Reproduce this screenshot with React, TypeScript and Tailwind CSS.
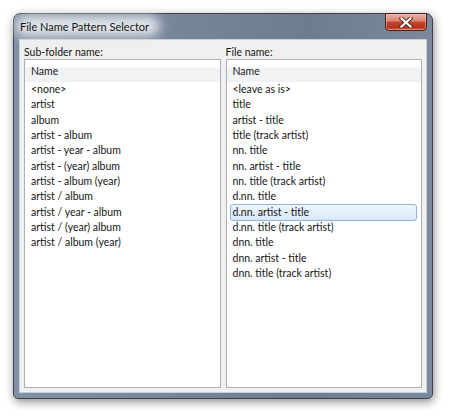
import React from "react";

const left = [
  "<none>",
  "artist",
  "album",
  "artist - album",
  "artist - year - album",
  "artist - (year) album",
  "artist - album (year)",
  "artist / album",
  "artist / year - album",
  "artist / (year) album",
  "artist / album (year)",
];

const right = [
  "<leave as is>",
  "title",
  "artist - title",
  "title (track artist)",
  "nn. title",
  "nn. artist - title",
  "nn. title (track artist)",
  "d.nn. title",
  "d.nn. artist - title",
  "d.nn. title (track artist)",
  "dnn. title",
  "dnn. artist - title",
  "dnn. title (track artist)",
];

function ListBox({ items, selected }: { items: string[]; selected?: number }) {
  return (
    <div className="flex-1 border border-[#a9b1bc] bg-white flex flex-col">
      <div className="h-[22px] shrink-0 flex items-center pl-[6px] pt-[1px] bg-[linear-gradient(to_bottom,#ffffff_0%,#ffffff_35%,#f1f2f4_36%,#f1f2f4_100%)] border-b border-[#eceef1]">
        <span className="text-[#1c1c1c]">Name</span>
      </div>
      <div className="flex flex-col">
        {items.map((t, i) => (
          <div key={i} className="relative h-[15.33px] mx-[3px] flex items-center">
            {i === selected && (
              <div className="absolute left-0 right-[1px] -top-[1px] -bottom-[1px] rounded-[3px] border border-[#8fb4e0] bg-[linear-gradient(to_bottom,#eef5fd,#d9e8fa)]" />
            )}
            <span className="relative pl-[3px] whitespace-pre text-[#151515] leading-[13px]">{t}</span>
          </div>
        ))}
      </div>
    </div>
  );
}

export default function App() {
  return (
    <div
      className="w-[450px] h-[416px] bg-white overflow-hidden pt-[13px] pl-[13px] text-[10.5px] leading-[14px]"
      style={{ fontFamily: 'Lato, "Noto Sans", sans-serif' }}
    >
      <div className="relative w-[420px] h-[386px] rounded-t-[7px] rounded-b-[5px] border border-[#39424e] bg-[linear-gradient(to_right,#8391a3,#76859a_40%,#6d7c90_70%,#7b899b)] shadow-[1px_3px_10px_rgba(0,0,0,0.45)] flex flex-col px-[5px] pb-[5px]">
        {/* title bar */}
        <div className="relative h-[25px] shrink-0 flex items-start">
          <div className="absolute left-[-4px] top-[2px] w-[145px] h-[20px] rounded-full bg-[#e6e9ee] blur-[6px]" />
          <span className="relative pl-[1px] pt-[6px] text-[11px] text-[#141414]">File Name Pattern Selector</span>
          <div className="absolute right-[0px] top-[-1px] w-[42px] h-[18px] rounded-b-[4px] border border-[#4a1d16] overflow-hidden bg-[linear-gradient(to_bottom,#eab3a7_0%,#d9826f_45%,#c24530_50%,#b8321d_85%,#d06048_100%)] shadow-[inset_0_0_0_1px_rgba(255,200,190,0.45)] flex items-center justify-center">
            <svg width="14" height="11" viewBox="0 0 14 11">
              <path d="M2.5 1.5 L11.5 9.5 M11.5 1.5 L2.5 9.5" stroke="#5b2a22" strokeWidth="4" strokeLinecap="square" />
              <path d="M2.5 1.5 L11.5 9.5 M11.5 1.5 L2.5 9.5" stroke="#ffffff" strokeWidth="2.2" strokeLinecap="square" />
            </svg>
          </div>
        </div>
        {/* client */}
        <div className="flex-1 border border-[#c9d1db] bg-[#f0f0f0] px-[4px] pb-[4px] pt-[5px] grid grid-cols-2 gap-x-[5px]">
          <div className="flex flex-col">
            <div className="h-[14px] text-[#151515]">Sub-folder name:</div>
            <ListBox items={left} />
          </div>
          <div className="flex flex-col">
            <div className="h-[14px] text-[#151515]">File name:</div>
            <ListBox items={right} selected={8} />
          </div>
        </div>
      </div>
    </div>
  );
}
